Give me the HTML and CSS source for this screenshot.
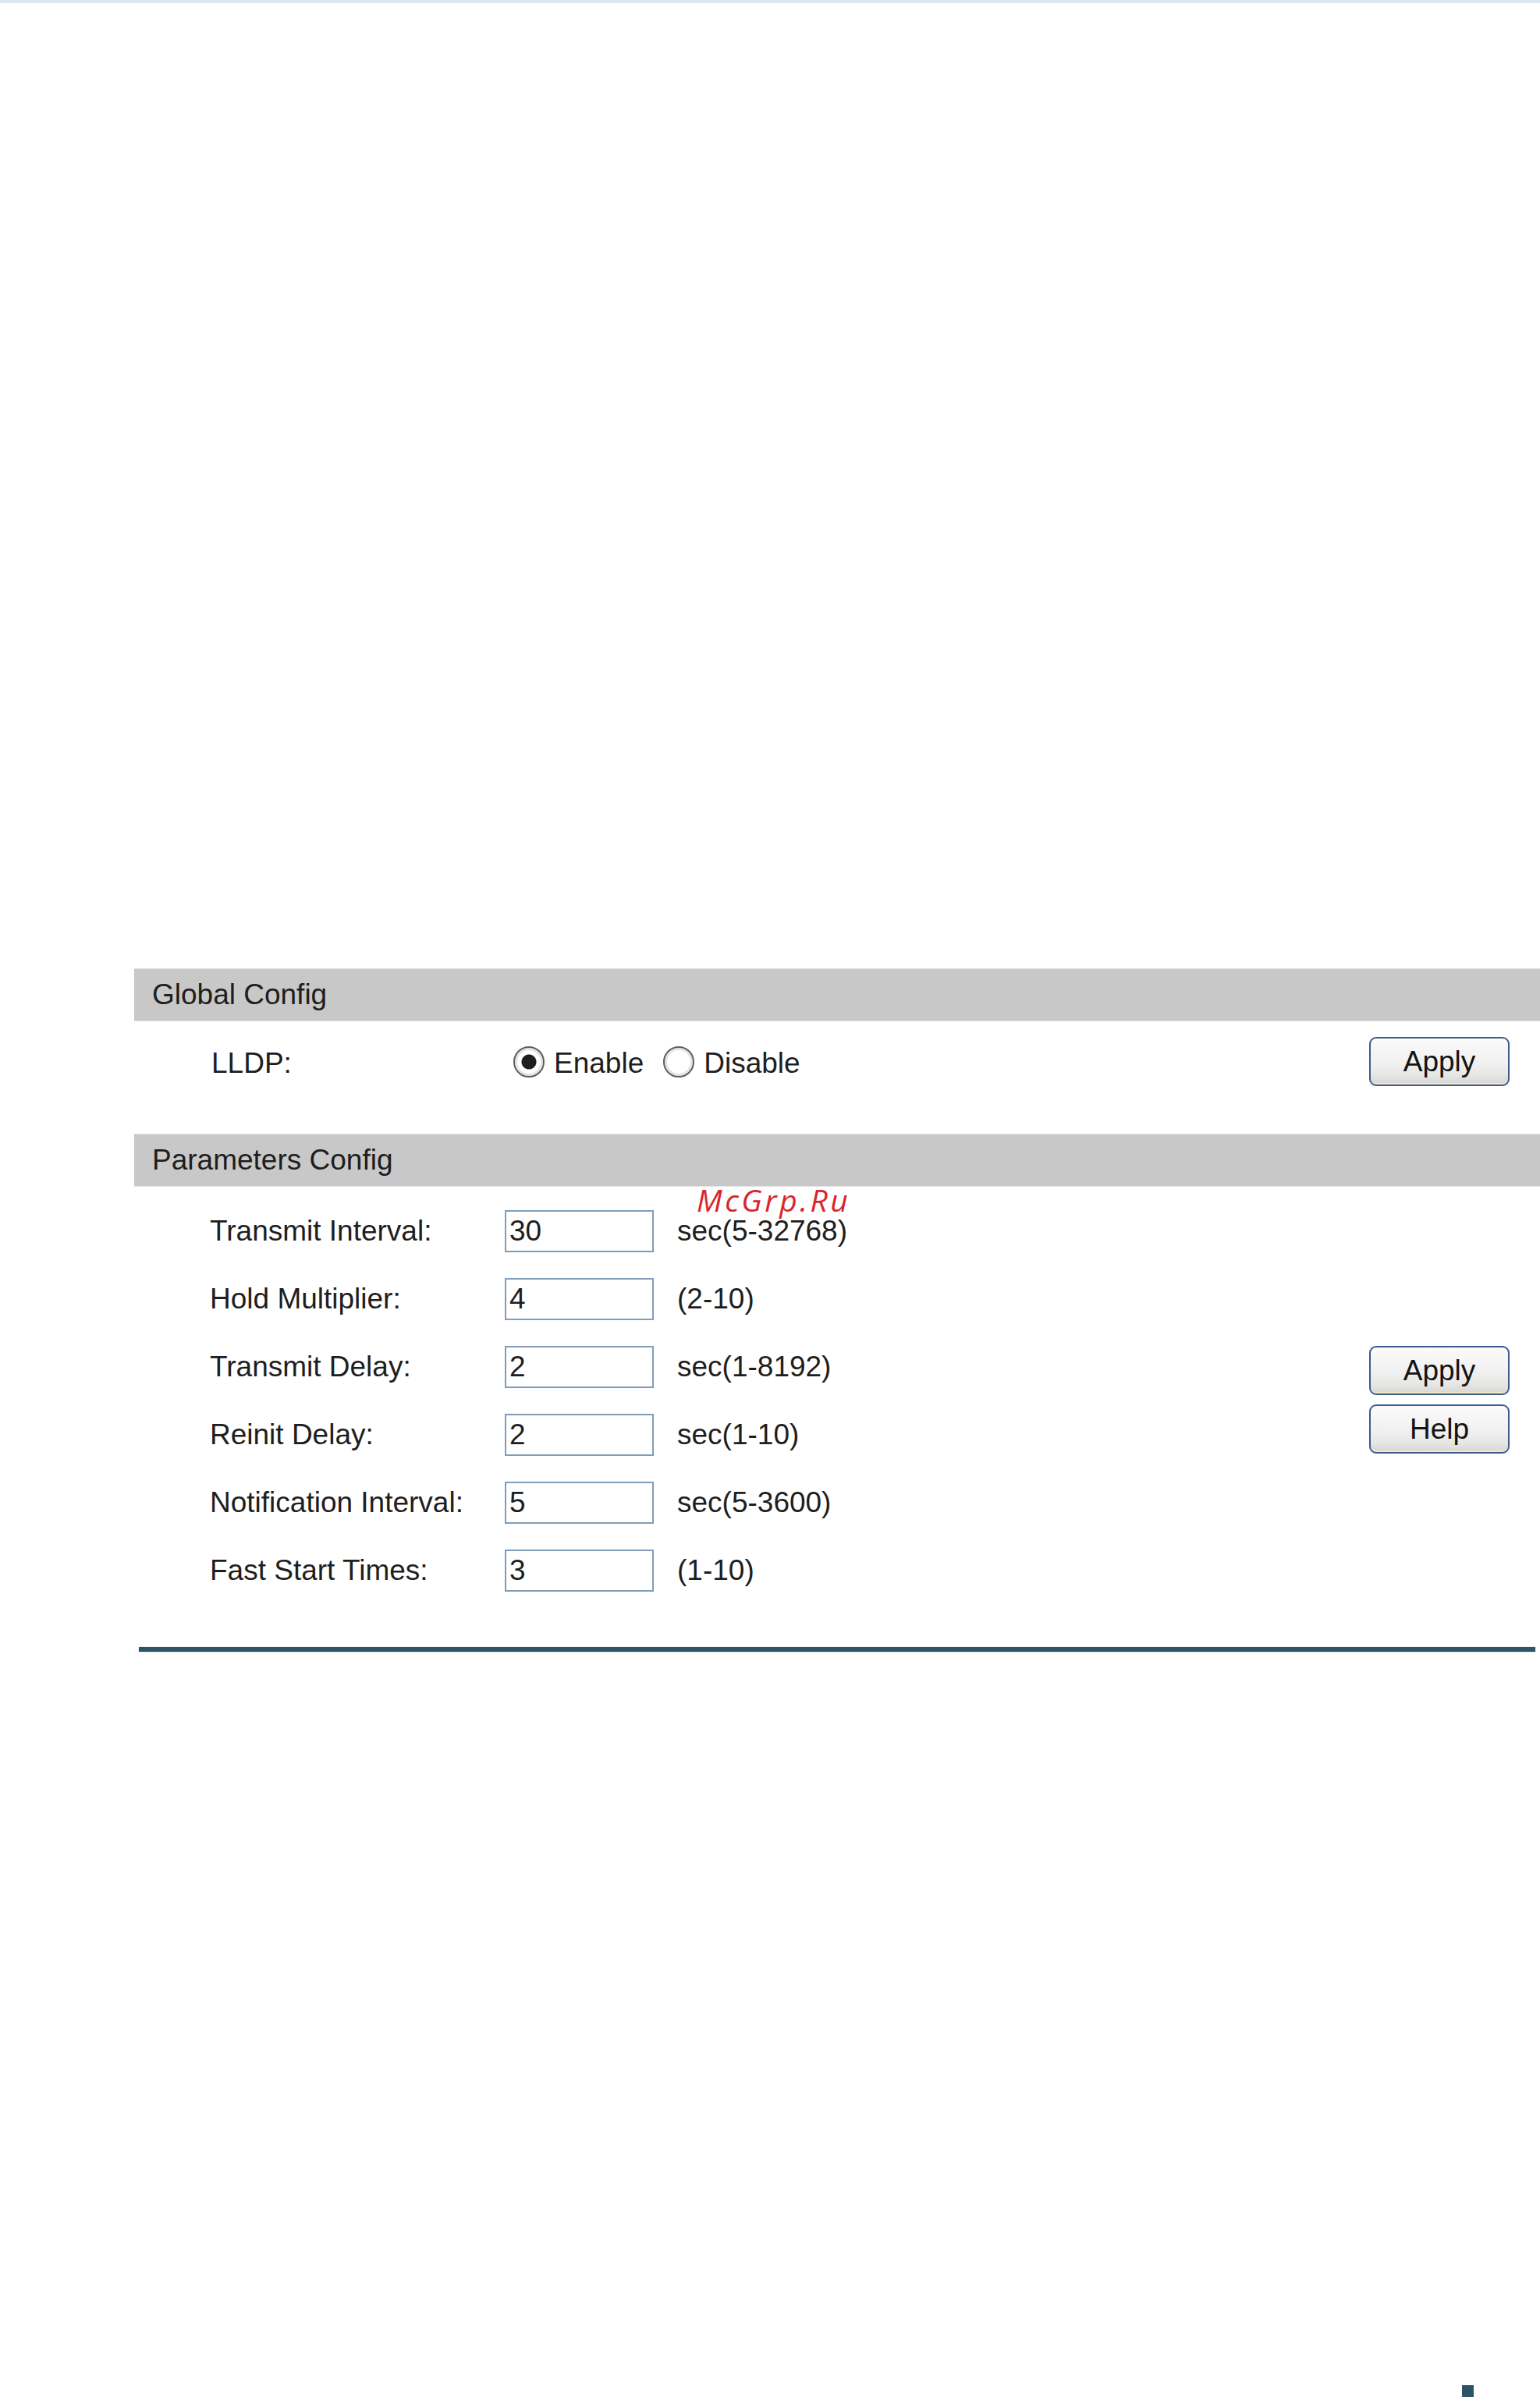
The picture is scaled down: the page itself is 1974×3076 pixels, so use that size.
FILE: index.html
```html
<!DOCTYPE html>
<html lang="en">
<head>
<meta charset="utf-8">
<title>LLDP Config</title>
<link rel="stylesheet" href="styles.css">
</head>
<body>
<div class="page">
  <div class="topbar"></div>
  <main class="content">
    <section class="panel">
      <h2 class="panel-head">Global Config</h2>
      <div class="global-row">
        <span class="label">LLDP:</span>
        <div class="radios">
          <label class="radio-opt"><input type="radio" name="lldp" class="radio" checked><span>Enable</span></label>
          <label class="radio-opt"><input type="radio" name="lldp" class="radio"><span>Disable</span></label>
        </div>
        <button class="btn global-btn">Apply</button>
      </div>
    </section>

    <section class="panel params">
      <h2 class="panel-head">Parameters Config</h2>
      <div class="params-body">
        <div class="fields">
          <span class="label">Transmit Interval:</span><input class="field" type="text" value="30"><span class="suffix">sec(5-32768)</span>
          <span class="label">Hold Multiplier:</span><input class="field" type="text" value="4"><span class="suffix">(2-10)</span>
          <span class="label">Transmit Delay:</span><input class="field" type="text" value="2"><span class="suffix">sec(1-8192)</span>
          <span class="label">Reinit Delay:</span><input class="field" type="text" value="2"><span class="suffix">sec(1-10)</span>
          <span class="label">Notification Interval:</span><input class="field" type="text" value="5"><span class="suffix">sec(5-3600)</span>
          <span class="label">Fast Start Times:</span><input class="field" type="text" value="3"><span class="suffix">(1-10)</span>
        </div>
        <div class="actions">
          <button class="btn">Apply</button>
          <button class="btn">Help</button>
        </div>
      </div>
      <span class="watermark">McGrp.Ru</span>
    </section>

    <hr class="sep">
  </main>
  <footer class="foot"><span class="marker"></span></footer>
</div>
</body>
</html>
```

FILE: styles.css
```css
html, body {
  margin: 0;
  padding: 0;
  background: #ffffff;
}

body {
  font-family: "Liberation Sans", Arial, sans-serif;
  font-size: 37px;
  color: #1e1e1e;
}

.page {
  min-height: 3076px;
  display: flex;
  flex-direction: column;
  overflow: hidden;
}

.topbar {
  height: 4px;
  background: #dce6ec;
}

.content {
  padding-top: 1237px;
  padding-left: 172px;
}

.panel-head {
  margin: 0;
  box-sizing: border-box;
  height: 68px;
  line-height: 66px;
  padding-left: 23px;
  background: #c8c8c8;
  border-top: 1px solid #e2e2e2;
  border-bottom: 1px solid #e2e2e2;
  font-size: 37px;
  font-weight: normal;
  color: #1e1e1e;
}

.global-row {
  display: flex;
  align-items: center;
  height: 63px;
  margin-top: 22px;
  padding-left: 99px;
}

.global-row .label {
  width: 376px;
  flex: none;
}

.radios {
  display: flex;
  align-items: center;
}

.radio-opt {
  display: flex;
  align-items: center;
  margin-right: 14px;
}

.radio {
  appearance: none;
  -webkit-appearance: none;
  box-sizing: border-box;
  width: 40px;
  height: 40px;
  margin: -4px 12px 0 11px;
  border-radius: 50%;
  border: 2px solid #5e5e5e;
  box-shadow: inset 0 0 0 3px #e4e4e4;
  background: #ffffff;
}

.radio:checked {
  background: radial-gradient(circle, #1e1e1e 0 9px, #ffffff 10px);
}

.btn {
  box-sizing: border-box;
  width: 180px;
  height: 63px;
  border: 2px solid #3d5b8c;
  border-radius: 9px;
  background: linear-gradient(#fbfbfb 0%, #f0f0f0 55%, #e6e6e4 80%, #d6d6d6 100%);
  box-shadow: inset 0 -9px 0 -7px #efe6c4;
  font-family: "Liberation Sans", Arial, sans-serif;
  font-size: 37px;
  color: #141414;
  padding: 0;
  line-height: 1;
}

.global-btn {
  margin-left: auto;
  margin-right: 39px;
  margin-top: -4px;
}

.params {
  position: relative;
  margin-top: 59px;
}

.params-body {
  display: flex;
  padding-top: 30px;
}

.fields {
  display: grid;
  grid-template-columns: 378px 191px auto;
  grid-auto-rows: 54px;
  row-gap: 33px;
  align-items: center;
  padding-left: 97px;
}

.field {
  box-sizing: border-box;
  width: 191px;
  height: 54px;
  border: 2px solid #7f9db9;
  padding: 0 4px;
  margin: 0;
  font-family: "Liberation Sans", Arial, sans-serif;
  font-size: 37px;
  color: #1e1e1e;
  background: #ffffff;
  outline: none;
}

.suffix {
  padding-left: 30px;
}

.actions {
  margin-left: auto;
  margin-right: 39px;
  padding-top: 174px;
  display: flex;
  flex-direction: column;
  gap: 12px;
}

.watermark {
  position: absolute;
  left: 721px;
  top: 65px;
  font-family: "Open Sans", "DejaVu Sans", sans-serif;
  font-style: italic;
  font-size: 39px;
  line-height: 39px;
  letter-spacing: 3.5px;
  color: #d9262a;
}

.sep {
  margin: 71px 6px 0 6px;
  height: 6px;
  border: none;
  background: #2f5467;
  box-shadow: 0 0 1px #8fa3ad;
}

.foot {
  margin-top: auto;
  display: flex;
  justify-content: flex-end;
  padding-right: 85px;
  padding-bottom: 4px;
}

.marker {
  width: 15px;
  height: 15px;
  background: #2b5566;
}
```
